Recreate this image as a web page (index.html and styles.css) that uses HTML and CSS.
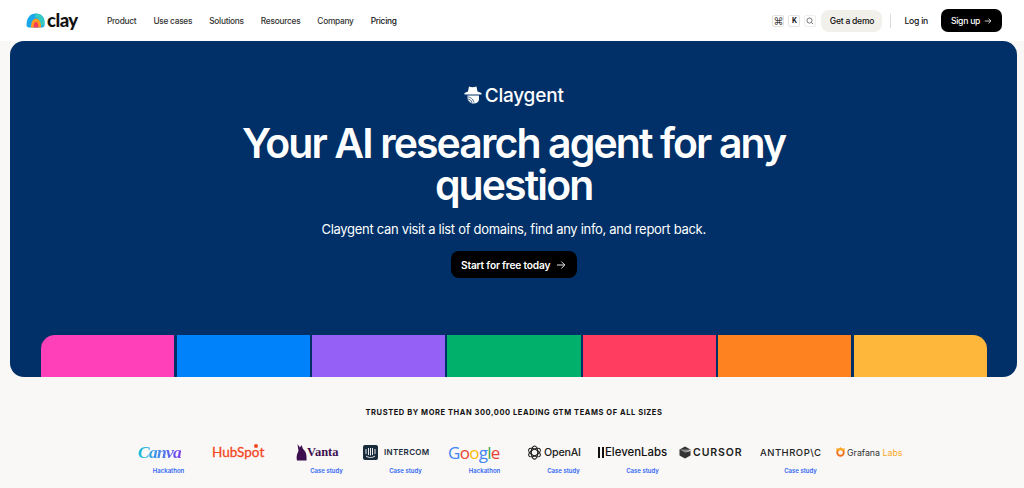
FILE: index.html
```html
<!DOCTYPE html>
<html lang="en">
  <head>
    <meta charset="UTF-8" />
    <title>Claygent</title>
    <link rel="stylesheet" href="styles.css">
  </head>

  <body>
    <header class="topbar">
      <a class="brand" href="#">
        <svg class="brand-icon" viewBox="0 0 19 15" width="19" height="15">
          <path d="M0.5 12 C0.5 5 4 0.5 10 0.5 C15 0.5 18.5 4 18.5 9 V12 C18.5 13.5 17.5 14.5 16 14.5 H3 C1.5 14.5 0.5 13.5 0.5 12 Z" fill="#1aa6ea" />
          <path d="M10 0.5 C15 0.5 18.5 4 18.5 9 V12 L14.5 13 C14.5 8 12.5 4.5 8.5 4 Z" fill="#36c9c0" />
          <path d="M5 14.5 C5 9 7 5.5 10 5.5 C13 5.5 15 9 15 14.5 Z" fill="#ff9a1f" />
          <path d="M7.5 14.5 C7.5 11 8.5 9 10 9 C11.5 9 12.5 11 12.5 14.5 Z" fill="#ef3f5c" />
        </svg>
        <span>clay</span>
      </a>
      <nav class="mainnav">
        <a href="#">Product</a>
        <a href="#">Use cases</a>
        <a href="#">Solutions</a>
        <a href="#">Resources</a>
        <a href="#">Company</a>
        <a href="#" class="strong">Pricing</a>
      </nav>
      <div class="actions">
        <span class="key wide">⌘</span>
        <span class="key">K</span>
        <span class="key search">
          <svg viewBox="0 0 10 10" width="8" height="8"><circle cx="4.4" cy="4.4" r="3.2" fill="none" stroke="#555" stroke-width="1" /><path d="M6.8 6.8 L9 9" stroke="#555" stroke-width="1" /></svg>
        </span>
        <a class="btn-demo" href="#">Get a demo</a>
        <span class="divider"></span>
        <a class="login" href="#">Log in</a>
        <a class="btn-dark btn-signup" href="#">Sign up
          <svg viewBox="0 0 10 10" width="8" height="8"><path d="M1 5 H8.6 M5.6 2 L8.6 5 L5.6 8" fill="none" stroke="#fff" stroke-width="1" /></svg>
        </a>
      </div>
    </header>

    <section class="hero">
      <div class="product">
        <svg viewBox="0 0 18 18" width="18" height="18">
          <path d="M5 0.5 C7 1.5 9.5 1.5 12.5 0.5 L13.5 5.5 L17.5 7 V8.5 H0.5 V7 L4 5.5 Z" fill="#fff" />
          <path d="M3.5 9.5 H15 V13 C15 15.8 13 17.5 9.5 17.5 C6 17.5 3.5 15 3.5 12 Z" fill="#fff" />
          <path d="M3.5 11 C6 11 9 12.5 10 16.5 M3.5 13 C5.5 13 7.5 14 8 17 M4 15 C5 15 5.5 15.5 6 16.5" fill="none" stroke="#003067" stroke-width="0.7" />
        </svg>
        <span>Claygent</span>
      </div>
      <h1>Your AI research agent for any question</h1>
      <p class="lead">Claygent can visit a list of domains, find any info, and report back.</p>
      <a class="btn-dark btn-start" href="#">Start for free today
        <svg viewBox="0 0 10 10" width="10" height="10"><path d="M1 5 H8.8 M5.4 1.6 L8.8 5 L5.4 8.4" fill="none" stroke="#fff" stroke-width="0.9" /></svg>
      </a>
      <div class="strip">
        <div class="tile pink"></div>
        <div class="tile blue"></div>
        <div class="tile violet"></div>
        <div class="tile green"></div>
        <div class="tile red"></div>
        <div class="tile orange"></div>
        <div class="tile yellow"></div>
      </div>
    </section>

    <section class="trusted">
      <h2>Trusted by more than 300,000 leading GTM teams of all sizes</h2>
      <div class="logos">
        <span class="logo canva"><span>Canva</span></span>
        <span class="logo hubspot">HubSp<span class="sprocket">o</span>t</span>
        <span class="logo vanta">
          <svg viewBox="0 0 11 17" width="11" height="17"><path d="M1.5 0 L4 3.5 L5.5 1 L7 5 C9.5 7 11 10 10.5 16.5 H1 C0 12 1.5 9 2.5 7 Z" fill="#3d0f4f" /></svg>
          <span>Vanta</span>
        </span>
        <span class="logo intercom">
          <svg viewBox="0 0 15 15" width="15" height="15"><rect width="15" height="15" rx="2" fill="#1a2b3c" /><path d="M3 4 V9 M5.5 3 V10 M7.5 3 V10.5 M9.5 3 V10 M12 4 V9 M3 11 C6 13 9 13 12 11" fill="none" stroke="#fff" stroke-width="0.9" /></svg>
          <span>INTERCOM</span>
        </span>
        <span class="logo google"><i class="g-blue">G</i><i class="g-red">o</i><i class="g-yellow">o</i><i class="g-blue">g</i><i class="g-green">l</i><i class="g-red">e</i></span>
        <span class="logo openai">
          <svg viewBox="0 0 16 16" width="15" height="15"><g fill="none" stroke="#222" stroke-width="1.2"><ellipse cx="8" cy="8" rx="3.4" ry="7" /><ellipse cx="8" cy="8" rx="3.4" ry="7" transform="rotate(60 8 8)" /><ellipse cx="8" cy="8" rx="3.4" ry="7" transform="rotate(120 8 8)" /></g></svg>
          <span>OpenAI</span>
        </span>
        <span class="logo eleven">
          <b class="bars"></b>
          <span>ElevenLabs</span>
        </span>
        <span class="logo cursor">
          <svg viewBox="0 0 12 13" width="12" height="13"><path d="M6 0.5 L11.5 3.5 V9.5 L6 12.5 L0.5 9.5 V3.5 Z" fill="#333" /><path d="M0.5 3.5 H11.5 L6 6.5 Z" fill="#888" /><path d="M6 6.5 L11.5 3.5 V5 Z" fill="#eee" /></svg>
          <span>CURSOR</span>
        </span>
        <span class="logo anthropic">ANTHROP\C</span>
        <span class="logo grafana">
          <svg viewBox="0 0 12 12" width="11" height="12"><circle cx="6" cy="6.5" r="3.6" fill="none" stroke="#f4701f" stroke-width="2" /><path d="M6 0.5 L7.5 2.5 L10.5 2 L10.5 5 L8 4 L4 4 L1.5 5 L1.5 2 L4.5 2.5 Z" fill="#fba91c" /></svg>
          <span>Grafana <em>Labs</em></span>
        </span>
      </div>
      <div class="tags">
        <span>Hackathon</span>
        <span></span>
        <span>Case study</span>
        <span>Case study</span>
        <span>Hackathon</span>
        <span>Case study</span>
        <span>Case study</span>
        <span></span>
        <span>Case study</span>
        <span></span>
      </div>
    </section>
  </body>
</html>
```

FILE: styles.css
```css
* {
  box-sizing: border-box;
}

html,
body {
  margin: 0;
  height: 488px;
  overflow: hidden;
}

body {
  background-color: #f9f8f6;
  font-family: "Inter", "Liberation Sans", sans-serif;
  color: #111;
}

a {
  color: inherit;
  text-decoration: none;
}

.topbar {
  height: 41px;
  background-color: #fff;
  display: flex;
  align-items: center;
  padding: 0 22px 0 26px;
}

.brand {
  display: flex;
  align-items: center;
  gap: 2px;
  width: 81px;
  font-family: "Lato", sans-serif;
  font-weight: 900;
  font-size: 18.5px;
  letter-spacing: -0.5px;
  margin-top: -2px;
}

.brand-icon {
  margin-top: 2px;
}

.mainnav {
  display: flex;
  gap: 17px;
  font-size: 8.3px;
  letter-spacing: -0.25px;
  font-weight: 500;
  color: #333;
}

.mainnav .strong {
  color: #111;
}

.actions {
  margin-left: auto;
  display: flex;
  align-items: center;
  font-size: 8.6px;
  letter-spacing: -0.25px;
  font-weight: 500;
}

.key {
  width: 12px;
  height: 12px;
  margin-right: 4px;
  border: 1px solid #e5e3de;
  border-radius: 2px;
  display: flex;
  align-items: center;
  justify-content: center;
  font-size: 7px;
  font-weight: 700;
}

.key.wide {
  font-size: 10px;
  font-weight: 400;
  color: #444;
}

.key.search {
  border-color: #f0eee9;
  margin-right: 5px;
}

.btn-demo {
  width: 61px;
  height: 22px;
  border-radius: 8px;
  background-color: #f2f0eb;
  display: flex;
  align-items: center;
  justify-content: center;
}

.divider {
  width: 1px;
  height: 14px;
  margin: 0 13px 0 8px;
  background-color: #dcdad5;
}

.login {
  margin-right: 13px;
}

.btn-dark {
  background-color: #000;
  color: #fff;
  display: flex;
  align-items: center;
  justify-content: center;
}

.btn-signup {
  width: 61px;
  height: 23px;
  border-radius: 7px;
  gap: 4px;
}

.hero {
  height: 336px;
  margin: 0 7px 0 10.3px;
  border-radius: 14px;
  background-color: #003067;
  color: #fff;
  display: flex;
  flex-direction: column;
  align-items: center;
  padding-top: 43px;
}

.product {
  display: flex;
  align-items: center;
  gap: 3px;
  height: 22px;
  font-size: 19px;
  font-weight: 500;
  letter-spacing: -0.2px;
}

h1 {
  margin: 16px 0 0;
  width: 600px;
  text-align: center;
  font-size: 41px;
  line-height: 42px;
  font-weight: 600;
  letter-spacing: -1.9px;
}

.lead {
  margin: 13px 0 0;
  font-size: 13px;
  letter-spacing: -0.3px;
  line-height: 20px;
}

.btn-start {
  margin-top: 12px;
  width: 126px;
  height: 27px;
  border-radius: 8px;
  gap: 6px;
  font-size: 10.2px;
  letter-spacing: -0.2px;
  font-weight: 600;
}

.strip {
  margin-top: auto;
  align-self: stretch;
  height: 42px;
  margin-left: 31px;
  margin-right: 30.3px;
  display: grid;
  grid-template-columns: repeat(7, 1fr);
  gap: 2.4px;
  border-radius: 14px 14px 0 0;
  overflow: hidden;
}

.pink { background-color: #ff40b8; }
.blue { background-color: #0082fb; }
.violet { background-color: #9460f5; }
.green { background-color: #00b06b; }
.red { background-color: #ff3d60; }
.orange { background-color: #ff8221; }
.yellow { background-color: #ffb73b; }

.trusted h2 {
  margin: 30px 0 0;
  padding-left: 4px;
  text-align: center;
  font-size: 7.5px;
  line-height: 11px;
  font-weight: 700;
  letter-spacing: 0.57px;
  text-transform: uppercase;
}

.logos {
  display: flex;
  align-items: center;
  height: 20px;
  margin-top: 24px;
  padding-left: 138px;
}

.logo {
  display: flex;
  align-items: center;
  flex: none;
  white-space: nowrap;
}

.canva {
  width: 74px;
  font-family: "Liberation Serif", serif;
  font-style: italic;
  font-weight: 700;
  font-size: 17.5px;
  letter-spacing: -0.7px;
}

.canva span {
  background: linear-gradient(90deg, #16c0d8, #3f8fe8 45%, #7d3cf0);
  -webkit-background-clip: text;
  background-clip: text;
  color: transparent;
}

.hubspot {
  width: 84px;
  font-family: "Lato", sans-serif;
  font-size: 13.5px;
  font-weight: 400;
  -webkit-text-stroke: 0.3px #f4461f;
  color: #f4461f;
}

.sprocket {
  position: relative;
}

.sprocket::before {
  content: "";
  position: absolute;
  left: 2px;
  top: 0;
  width: 4px;
  height: 4px;
  border-radius: 50%;
  background-color: #f4461f;
}

.vanta {
  width: 67px;
  gap: 0;
  font-family: "Liberation Serif", serif;
  font-size: 12.5px;
  font-weight: 700;
  color: #3d0f4f;
}

.intercom {
  width: 85px;
  gap: 6px;
  font-size: 8px;
  font-weight: 600;
  letter-spacing: 0.3px;
  color: #1a2b3c;
}

.google {
  width: 79px;
  font-family: "Open Sans", sans-serif;
  font-size: 17px;
  font-weight: 500;
  letter-spacing: -0.7px;
}

.google i {
  font-style: normal;
}

.g-blue { color: #4285f4; }
.g-red { color: #ea4335; }
.g-yellow { color: #fbbc05; }
.g-green { color: #34a853; }

.openai {
  width: 71px;
  gap: 2px;
  font-size: 10.7px;
  letter-spacing: -0.2px;
  font-weight: 500;
  color: #222;
}

.eleven {
  width: 81px;
  gap: 1px;
  font-size: 11.4px;
  font-weight: 500;
  color: #111;
}

.bars {
  width: 6px;
  height: 11px;
  border-left: 2px solid #111;
  border-right: 2px solid #111;
}

.cursor {
  width: 81px;
  gap: 2px;
  font-size: 10.5px;
  font-weight: 600;
  letter-spacing: 0.9px;
  color: #222;
}

.anthropic {
  width: 75px;
  font-size: 9.5px;
  font-weight: 500;
  letter-spacing: 0.5px;
  color: #222;
}

.grafana {
  gap: 1px;
  font-size: 8.8px;
  color: #333;
}

.grafana em {
  font-style: normal;
  color: #f9a825;
}

.tags {
  display: grid;
  grid-template-columns: repeat(10, 79px);
  margin-left: 129px;
  margin-top: 4px;
  text-align: center;
  font-size: 6px;
  line-height: 10px;
  font-weight: 600;
  color: #2f66f5;
}
```
